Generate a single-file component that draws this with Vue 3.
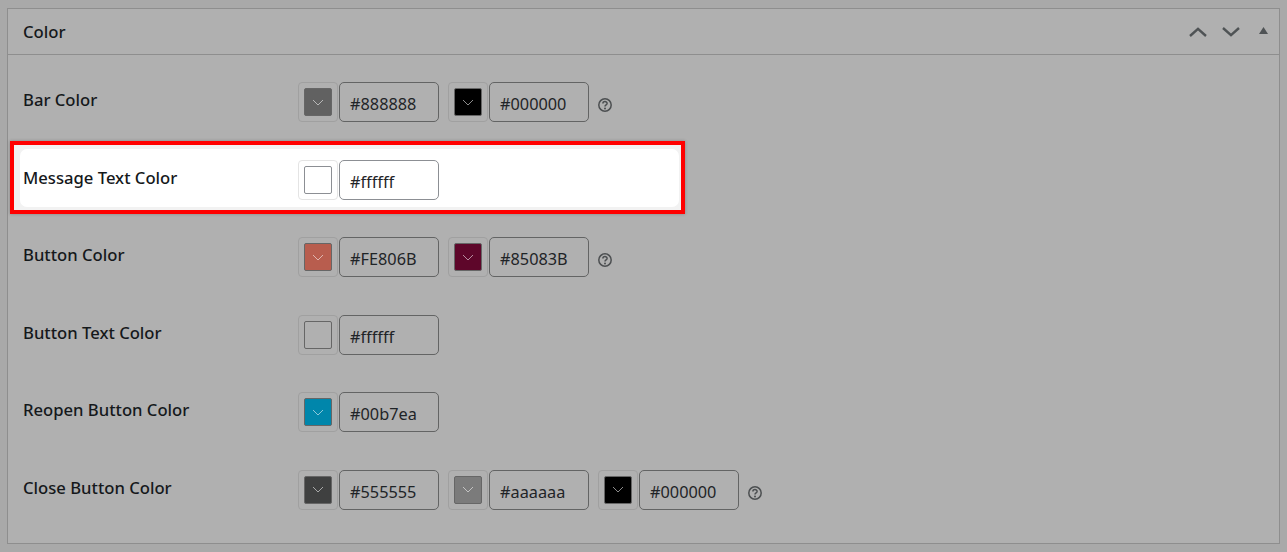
<script setup>
const rows = [
  { label: 'Bar Color', help: true, fields: [{ value: '#888888', color: '#616161' }, { value: '#000000', color: '#000000' }] },
  { label: 'Message Text Color', active: true, fields: [{ value: '#ffffff', color: '#ffffff', blank: true }] },
  { label: 'Button Color', help: true, fields: [{ value: '#FE806B', color: '#b85d4e' }, { value: '#85083B', color: '#5e062a' }] },
  { label: 'Button Text Color', fields: [{ value: '#ffffff', color: '#b0b0b0', blank: true }] },
  { label: 'Reopen Button Color', fields: [{ value: '#00b7ea', color: '#0086ab' }] },
  { label: 'Close Button Color', help: true, fields: [{ value: '#555555', color: '#3f4040' }, { value: '#aaaaaa', color: '#7b7b7b' }, { value: '#000000', color: '#000000' }] },
]
</script>

<template>
  <div class="page">
    <section class="panel">
      <header class="panel_head">
        <h2>Color</h2>
        <div class="head_actions">
          <svg width="18" height="10" viewBox="0 0 18 10"><path d="M1 9 L9 1.8 L17 9" fill="none" stroke="#4f5355" stroke-width="2.4" /></svg>
          <svg width="18" height="10" viewBox="0 0 18 10"><path d="M1 1 L9 8.2 L17 1" fill="none" stroke="#4f5355" stroke-width="2.4" /></svg>
          <svg class="caret" width="9" height="7" viewBox="0 0 9 7"><path d="M4.5 0 L9 7 L0 7 Z" fill="#4f5355" /></svg>
        </div>
      </header>
      <div class="panel_body">
        <div v-for="row in rows" :key="row.label" class="row" :class="{ active: row.active }">
          <div v-if="row.active" class="highlight"></div>
          <label class="row_label">{{ row.label }}</label>
          <div class="fields">
            <div v-for="field in row.fields" :key="field.value" class="field">
              <div class="swatch_btn">
                <div class="swatch" :style="{ background: field.color }">
                  <svg v-if="!field.blank" width="12" height="7" viewBox="0 0 12 7"><path d="M1 1 L6 6 L11 1" fill="none" stroke="#ffffff" stroke-opacity="0.55" stroke-width="1" /></svg>
                </div>
              </div>
              <div class="hex">{{ field.value }}</div>
            </div>
            <svg v-if="row.help" class="help" width="14" height="14" viewBox="0 0 14 14">
              <circle cx="7" cy="7" r="6.2" fill="none" stroke="#4c4f51" stroke-width="1.5" />
              <path d="M4.9 5.5 C4.9 3 9.1 3 9.1 5.4 C9.1 6.9 7 6.8 7 8.5" fill="none" stroke="#4c4f51" stroke-width="1.5" />
              <circle cx="7" cy="10.5" r="1" fill="#4c4f51" />
            </svg>
          </div>
        </div>
      </div>
    </section>
  </div>
</template>

<style scoped>
.page {
  height: 552px;
  box-sizing: border-box;
  padding: 8px 7px;
  background: #a9a9a9;
  font-family: "Noto Sans", "Open Sans", sans-serif;
  color: #15181b;
  overflow: hidden;
}

.panel {
  height: 536px;
  box-sizing: border-box;
  background: #b0b0b0;
  border: 1px solid #8e8e8e;
}

.panel_head {
  height: 46px;
  box-sizing: border-box;
  border-bottom: 1px solid #8e8e8e;
  display: flex;
  align-items: center;
  justify-content: space-between;
  padding: 0 11px 0 15px;
}

.panel_head h2 {
  margin: 0;
  font-size: 16.7px;
  font-weight: 500;
}

.head_actions {
  display: flex;
  align-items: center;
  gap: 15px;
}

.caret {
  margin: -2px 0 0 4px;
}

.panel_body {
  padding-top: 8.5px;
}

.row {
  position: relative;
  height: 77.5px;
  box-sizing: border-box;
  padding: 18.5px 15px 0;
  display: flex;
}

.highlight {
  position: absolute;
  left: 2px;
  top: 0;
  width: 675px;
  height: 73px;
  box-sizing: border-box;
  border: 4px solid #ff0000;
  background: #f2f2f2;
  box-shadow: 0 0 3px rgba(0, 0, 0, 0.25);
}

.highlight::before {
  content: "";
  position: absolute;
  inset: 4px 2px 3px 6px;
  background: #ffffff;
  border-radius: 7px;
}

.row_label {
  position: relative;
  width: 275px;
  flex: none;
  font-size: 16.65px;
  font-weight: 500;
  line-height: 36px;
}

.fields {
  position: relative;
  display: flex;
  align-items: center;
  height: 40px;
}

.field {
  display: flex;
  gap: 1px;
  margin-right: 9px;
}

.swatch_btn {
  width: 40px;
  height: 40px;
  box-sizing: border-box;
  border: 1px solid #a0a0a0;
  border-radius: 4px;
  display: flex;
  align-items: center;
  justify-content: center;
}

.swatch {
  width: 28px;
  height: 28px;
  box-sizing: border-box;
  border: 1px solid #666;
  border-radius: 2px;
  display: flex;
  align-items: center;
  justify-content: center;
}

.hex {
  width: 100px;
  height: 40px;
  box-sizing: border-box;
  border: 1px solid #636464;
  border-radius: 5px;
  padding: 0 10px;
  font-size: 16.3px;
  line-height: 42px;
  color: #1f2427;
}

.help {
  margin: 6px 0 0 -0.5px;
}

.active .swatch_btn {
  border-color: #e4e4e4;
}

.active .swatch {
  border-color: #8c8f94;
}

.active .hex {
  border-color: #8c8f94;
  background: #fff;
}
</style>
